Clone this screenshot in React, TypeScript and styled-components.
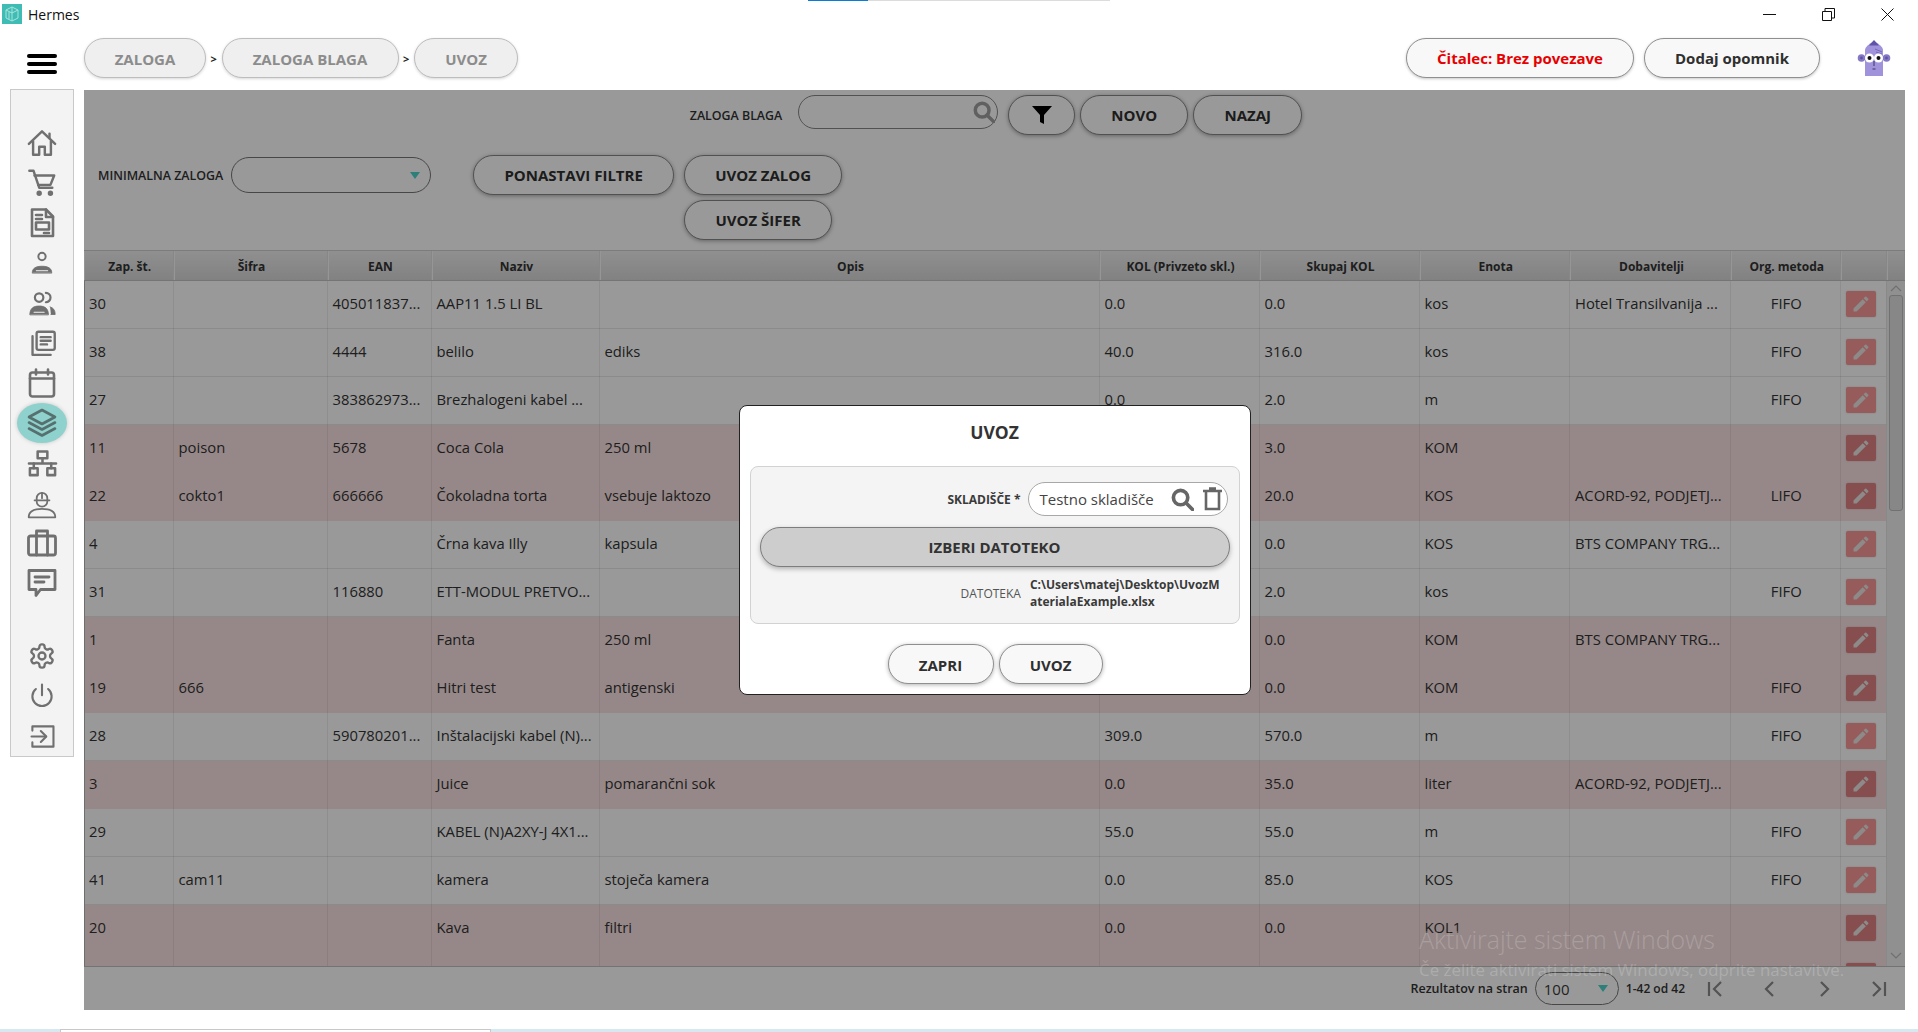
import React from "react";
import styled, { createGlobalStyle } from "styled-components";

const GlobalStyle = createGlobalStyle`
  html, body { margin: 0; padding: 0; height: 100%; background: #fff; overflow: hidden; }
  body { font-family: "Open Sans", "Noto Sans", "Liberation Sans", sans-serif; color: #333; }
  #root { height: 100%; }
  * { box-sizing: border-box; }
`;

const Shell = styled.div`
  height: 1032px;
  display: flex;
  flex-direction: column;
  position: relative;
  overflow: hidden;
`;

/* ---------- window title bar ---------- */
const TitleBar = styled.div`
  height: 30px;
  flex: none;
  display: flex;
  align-items: center;
  padding: 0 1px 2px 2px;
  position: relative;
`;
const LoadStrip = styled.div`
  position: absolute;
  top: 0;
  left: 808px;
  width: 302px;
  height: 1px;
  background: linear-gradient(90deg, #0a7bd6 0 60px, #dcdcdc 60px);
`;
const WindowName = styled.span`
  margin-left: 6px;
  font-size: 14px;
  color: #111;
`;
const WindowButtons = styled.div`
  margin-left: auto;
  display: flex;
`;
const WindowButton = styled.div`
  width: 59px;
  height: 26px;
  display: flex;
  align-items: center;
  justify-content: center;
`;

/* ---------- header ---------- */
const Header = styled.header`
  height: 59px;
  flex: none;
  display: flex;
  align-items: flex-start;
  padding: 8px 27px 0 27px;
`;
const Burger = styled.div`
  width: 30px;
  height: 20px;
  margin: 16px 27px 0 0;
  display: flex;
  flex-direction: column;
  justify-content: space-between;
  span {
    display: block;
    height: 4px;
    border-radius: 2px;
    background: #000;
  }
`;
const Crumbs = styled.nav`
  display: flex;
  align-items: center;
`;
const Crumb = styled.div<{ $w: number }>`
  width: ${(p) => p.$w}px;
  height: 40px;
  padding-top: 2px;
  border-radius: 20px;
  border: 1px solid #bdbdbd;
  background: #efefef;
  color: #8c8c8c;
  font-size: 15px;
  font-weight: 700;
  display: flex;
  align-items: center;
  justify-content: center;
  box-shadow: 0 1px 3px rgba(0, 0, 0, 0.16);
`;
const CrumbSep = styled.span`
  width: 15.500px;
  text-align: center;
  font-size: 11px;
  font-weight: 700;
  color: #222;
`;
const HeaderRight = styled.div`
  margin-left: auto;
  display: flex;
  align-items: flex-start;
`;
const HeaderPill = styled.button<{ $w: number; $alert?: boolean }>`
  width: ${(p) => p.$w}px;
  height: 40px;
  margin-left: 10px;
  border-radius: 20px;
  border: 1px solid #8f8f8f;
  background: #f8f8f8;
  color: ${(p) => (p.$alert ? "#e60000" : "#2f2f2f")};
  font: 700 15px "Open Sans", sans-serif;
  box-shadow: 0 1px 3px rgba(0, 0, 0, 0.22);
  padding: 0;
`;
const Mascot = styled.div`
  width: 34px;
  height: 40px;
  margin: 1px 0 0 37px;
`;

/* ---------- body ---------- */
const Body = styled.div`
  height: 921px;
  flex: none;
  display: flex;
  align-items: flex-start;
  padding: 0 13px 0 10px;
`;
const Sidebar = styled.aside`
  width: 64px;
  height: 668px;
  margin-right: 10px;
  flex: none;
  background: #f3f3f3;
  border: 1px solid #c9c9c9;
  padding-top: 33px;
  display: flex;
  flex-direction: column;
  align-items: center;
`;
const NavItem = styled.div<{ $active?: boolean; $gap?: boolean }>`
  width: 50px;
  height: 40px;
  flex: none;
  margin-top: ${(p) => (p.$gap ? "33px" : "0")};
  border-radius: 50%;
  display: flex;
  align-items: center;
  justify-content: center;
  background: ${(p) => (p.$active ? "#8fd1cc" : "transparent")};
  box-shadow: ${(p) => (p.$active ? "0 0 4px rgba(0,0,0,.18)" : "none")};
  color: ${(p) => (p.$active ? "#55706e" : "#707070")};
`;
const Main = styled.main`
  flex: 1;
  height: 920px;
  margin-top: 1px;
  position: relative;
  display: flex;
  flex-direction: column;
  background: #fff;
  overflow: hidden;
`;

/* ---------- toolbar ---------- */
const Toolbar = styled.section`
  height: 160px;
  flex: none;
`;
const ToolbarTop = styled.div`
  display: flex;
  justify-content: center;
  align-items: flex-start;
  padding: 5px 0 0 3px;
`;
const ToolbarSecond = styled.div`
  display: flex;
  align-items: flex-start;
  margin-top: 19px;
  padding-left: 14px;
`;
const FieldLabel = styled.span`
  font-size: 12.400px;
  font-weight: 600;
  color: #333;
  line-height: 41px;
  white-space: nowrap;
`;
const SearchBox = styled.div`
  width: 200px;
  height: 34px;
  margin: 0 10px 0 16px;
  border: 1px solid #888;
  border-radius: 17px;
  background: #fff;
  display: flex;
  align-items: center;
  justify-content: flex-end;
  padding-right: 2px;
  color: #a0a0a0;
`;
const ActionButton = styled.button<{ $w: number; $ml?: number }>`
  width: ${(p) => p.$w}px;
  height: 40px;
  margin-left: ${(p) => p.$ml ?? 0}px;
  flex: none;
  border-radius: 20px;
  border: 1px solid #888;
  background: #fff;
  color: #2f2f2f;
  font: 700 15px "Open Sans", sans-serif;
  box-shadow: 0 1px 4px rgba(0, 0, 0, 0.35);
  padding: 0;
  display: flex;
  align-items: center;
  justify-content: center;
`;
const DropBox = styled.div<{ $w: number }>`
  width: ${(p) => p.$w}px;
  height: 36px;
  margin: 2px 0 0 8px;
  border: 1px solid #777;
  border-radius: 18px;
  background: #fff;
  display: flex;
  align-items: center;
  justify-content: flex-end;
  padding-right: 10px;
`;
const Caret = styled.span`
  width: 0;
  height: 0;
  border-left: 5px solid transparent;
  border-right: 5px solid transparent;
  border-top: 7px solid #4ad5ca;
`;
const ImportStack = styled.div`
  display: flex;
  flex-direction: column;
  gap: 5px;
  margin-left: 10px;
`;

/* ---------- table ---------- */
const colTemplate =
  "89.5px 154px 104px 168px 500px 160px 160px 150.5px 161px 109.5px 46px";
const HeadRow = styled.div`
  height: 31px;
  flex: none;
  display: grid;
  grid-template-columns: ${colTemplate} 1fr;
  background: linear-gradient(#f0f0f0, #d8d8d8);
  border-top: 1px solid #cfcfcf;
  border-bottom: 1px solid #c4c4c4;
`;
const HeadCell = styled.div`
  display: flex;
  align-items: center;
  justify-content: center;
  padding: 2px 0 0 2px;
  font-size: 12px;
  font-weight: 700;
  color: #333;
  border-right: 1px solid #e2e2e2;
  border-left: 1px solid #fafafa;
  white-space: nowrap;
`;
const TableBody = styled.div`
  height: 685px;
  flex: none;
  display: flex;
  overflow: hidden;
`;
const Rows = styled.div`
  width: 1802px;
  flex: none;
`;
const Row = styled.div<{ $pink?: boolean }>`
  height: 48px;
  display: grid;
  grid-template-columns: ${colTemplate};
  background: ${(p) => (p.$pink ? "#fbe3e3" : "#fff")};
  box-shadow: inset 1px 0 0 #b8b8b8, inset 0 -1px 0 ${(p) => (p.$pink ? "#fbe3e3" : "#e8e8e8")};
`;
const Cell = styled.div<{ $center?: boolean }>`
  display: flex;
  align-items: center;
  justify-content: ${(p) => (p.$center ? "center" : "flex-start")};
  padding-left: ${(p) => (p.$center ? 2 : 5)}px;
  padding-bottom: 4px;
  font-size: 14.800px;
  color: #333;
  border-right: 1px solid rgba(0, 0, 0, 0.07);
  white-space: nowrap;
  overflow: hidden;
`;
const ActionCell = styled.div`
  display: flex;
  align-items: center;
  padding: 0 0 3px 5px;
  border-right: 1px solid rgba(0, 0, 0, 0.07);
`;
const EditButton = styled.div<{ $pink?: boolean }>`
  width: 30px;
  height: 26px;
  border-radius: 2px;
  background: ${(p) => (p.$pink ? "#e08282" : "#fb9898")};
  color: #ebe6e6;
  display: flex;
  align-items: center;
  justify-content: center;
  box-shadow: 0 0 2px rgba(0, 0, 0, 0.18);
`;
const Scrollbar = styled.div`
  flex: 1;
  background: #f0f0f0;
  box-shadow: inset 1px 0 0 #e4e4e4;
  display: flex;
  flex-direction: column;
  align-items: center;
  padding-top: 4px;
`;
const ScrollThumb = styled.div`
  width: 14px;
  height: 216px;
  margin-top: 3px;
  background: #e2e2e2;
  border: 1px solid #bcbcbc;
  border-radius: 3px;
`;
const ScrollEnd = styled.div`
  margin-top: auto;
  padding-bottom: 2px;
`;

/* ---------- footer ---------- */
const Footer = styled.footer`
  flex: 1;
  background: #fff;
  border-top: 1px solid #c0c0c0;
  display: flex;
  align-items: center;
  justify-content: flex-end;
`;
const FootText = styled.span<{ $size: number }>`
  font-size: ${(p) => p.$size}px;
  font-weight: 600;
  color: #333;
  white-space: nowrap;
`;
const PageSize = styled.div`
  width: 84px;
  height: 33px;
  margin: 0 7px;
  border: 1px solid #777;
  border-radius: 17px;
  display: flex;
  align-items: center;
  justify-content: space-between;
  padding: 0 10px 0 8px;
  font-size: 15px;
  color: #3a3a3a;
`;
const PageButton = styled.div`
  width: 54px;
  height: 32px;
  display: flex;
  align-items: center;
  justify-content: center;
  color: #8a8a8a;
`;
const PageButtons = styled.div`
  display: flex;
  margin-left: 4px;
`;

/* ---------- modal ---------- */
const Dim = styled.div`
  position: absolute;
  inset: 0;
  background: rgba(0, 0, 0, 0.4);
  display: flex;
  align-items: center;
  justify-content: center;
`;
const Modal = styled.div`
  width: 512px;
  height: 290px;
  background: #fff;
  border: 1px solid #222;
  border-radius: 8px;
  padding: 0 10px;
  display: flex;
  flex-direction: column;
  align-items: stretch;
`;
const ModalTitle = styled.h2`
  margin: 0;
  height: 60px;
  flex: none;
  padding-top: 13px;
  font-size: 17.500px;
  line-height: 26px;
  font-weight: 700;
  text-align: center;
  color: #333;
`;
const ModalPanel = styled.div`
  height: 158px;
  flex: none;
  background: #f4f4f4;
  border: 1px solid #d2d2d2;
  border-radius: 8px;
  padding: 15px 9px 0;
  display: flex;
  flex-direction: column;
`;
const StoreRow = styled.div`
  display: flex;
  align-items: center;
  justify-content: flex-end;
  padding-right: 2px;
  gap: 7px;
`;
const StoreLabel = styled.span`
  font-size: 12px;
  font-weight: 700;
  color: #3a3a3a;
`;
const StoreInput = styled.div`
  width: 200px;
  height: 34px;
  background: #fff;
  border: 1px solid #a8a8a8;
  border-radius: 17px;
  display: flex;
  align-items: center;
  padding: 0 5px 0 11px;
  font-size: 15px;
  color: #444;
  white-space: nowrap;
`;
const StoreIcons = styled.div`
  margin-left: auto;
  display: flex;
  align-items: center;
  gap: 9px;
  color: #666;
`;
const PickFile = styled.button`
  height: 40px;
  margin-top: 11px;
  flex: none;
  border-radius: 20px;
  border: 1px solid #7d7d7d;
  background: #cdcdcd;
  color: #333;
  font: 700 15px "Open Sans", sans-serif;
  box-shadow: 0 2px 5px rgba(0, 0, 0, 0.28);
`;
const FileRow = styled.div`
  display: flex;
  align-items: center;
  margin-top: 9px;
  padding-left: 201px;
`;
const FileLabel = styled.span`
  font-size: 12px;
  color: #555;
  margin-right: 9px;
`;
const FilePath = styled.span`
  width: 190px;
  font-size: 12px;
  line-height: 17px;
  font-weight: 700;
  color: #3a3a3a;
  word-break: break-all;
`;
const ModalActions = styled.div`
  display: flex;
  justify-content: center;
  gap: 5px;
  padding: 20px 0 0 1px;
`;
const ModalButton = styled.button<{ $w: number }>`
  width: ${(p) => p.$w}px;
  height: 40px;
  border-radius: 20px;
  border: 1px solid #8f8f8f;
  background: #f8f8f8;
  color: #2f2f2f;
  font: 700 15px "Open Sans", sans-serif;
  box-shadow: 0 1px 4px rgba(0, 0, 0, 0.3);
  padding: 2px 0 0;
`;

/* ---------- overlays at the screen edge ---------- */
const Watermark = styled.div`
  position: absolute;
  left: 1419px;
  top: 920px;
  color: rgba(255, 255, 255, 0.2);
  pointer-events: none;
  white-space: nowrap;
  div:first-child {
    font-size: 24.900px;
    line-height: 38px;
    font-weight: 300;
  }
  div:last-child {
    font-size: 16.900px;
    line-height: 24px;
  }
`;
const BottomGap = styled.div`
  height: 19px;
  flex: none;
`;
const TaskStrip = styled.div`
  height: 3px;
  flex: none;
  background: #d6e9f0;
  padding-left: 60px;
`;
const TaskWindow = styled.div`
  width: 431px;
  height: 3px;
  background: #fff;
  border-top: 1px solid #c8c8c8;
  border-left: 1px solid #c8c8c8;
  border-right: 1px solid #c8c8c8;
`;

/* ---------- icons ---------- */
const Ico: React.FC<{ s?: number; w?: number; children: React.ReactNode; vb?: string }> = ({
  s = 30,
  w = 2.6,
  vb = "0 0 32 32",
  children,
}) => (
  <svg
    width={s}
    height={s}
    viewBox={vb}
    fill="none"
    stroke="currentColor"
    strokeWidth={w}
    strokeLinecap="round"
    strokeLinejoin="round"
  >
    {children}
  </svg>
);

const navIcons: React.ReactNode[] = [
  <Ico key="home">
    <path d="M2 17 16 3.500 30 17" />
    <path d="M24 6v4" />
    <path d="M6.500 14v14.500H13V20h6v8.500h6.500V14" />
  </Ico>,
  <Ico key="cart">
    <path d="M2.500 3h4.500l6 18h14" />
    <path d="M8 8h21l-4 10H12" />
    <circle cx="13" cy="27" r="1.600" fill="currentColor" />
    <circle cx="25" cy="27" r="1.600" fill="currentColor" />
  </Ico>,
  <Ico key="doc" s={32}>
    <path d="M6 2.500h14l7 7v19.500H6z" />
    <path d="M20 2.500V10h7" />
    <path d="M10 8h6M10 12h6" />
    <rect x="10" y="15.500" width="13" height="7" />
    <path d="M18 26h5" />
  </Ico>,
  <Ico key="user" s={26} w={2.4}>
    <circle cx="16" cy="8" r="4.500" />
    <path d="M4 28c0-6 5-8 12-8s12 2 12 8z" fill="currentColor" strokeWidth={1} />
    <path d="M9 25.500h14" stroke="#f3f3f3" strokeWidth={1.200} />
  </Ico>,
  <Ico key="users" s={27} w={2.6}>
    <circle cx="12" cy="9" r="5" />
    <path d="M20 3.500a5.500 5.500 0 0 1 0 11" />
    <path d="M1 29c0-7 4-10 11-10s11 3 11 10z" fill="currentColor" strokeWidth={1} />
    <path d="M25 20c4 1 6 4 6 9h-5" fill="currentColor" strokeWidth={1} />
    <path d="M6 26.500h12" stroke="#f3f3f3" strokeWidth={1.200} />
  </Ico>,
  <Ico key="stack" s={29}>
    <rect x="9.500" y="3" width="20" height="20" rx="2" />
    <path d="M5 8v20.500h20" />
    <path d="M14 9h11M14 13h11M14 17h7" />
  </Ico>,
  <Ico key="cal" s={32}>
    <rect x="4" y="5.500" width="24" height="24" rx="2.500" />
    <path d="M4 11.500h24" />
    <path d="M10 2.500v5M22 2.500v5" />
  </Ico>,
  <Ico key="layers" s={32} w={2.6}>
    <path d="M16 3 29 10 16 17 3 10z" />
    <path d="M3 15.500 16 22.500 29 15.500" />
    <path d="M3 21.500 16 28.500 29 21.500" />
  </Ico>,
  <Ico key="net" s={31} w={2.6}>
    <rect x="11" y="3.500" width="10" height="7" />
    <path d="M16 10.500V16M2 16h28" />
    <path d="M7 16v5M25 16v5" />
    <rect x="3" y="21" width="8" height="7" />
    <rect x="21" y="21" width="8" height="7" />
  </Ico>,
  <Ico key="worker" s={34} w={1.7}>
    <path d="M9 13.500h14" />
    <path d="M11 13.500v-2a5 5 0 0 1 10 0v2" />
    <path d="M16 6.500v5" />
    <path d="M11 14.500a5 5 0 0 0 10 0" />
    <path d="M3.500 29.500c0-6 5-8 12.500-8s12.500 2 12.500 8z" />
  </Ico>,
  <Ico key="case" s={32} w={2.8}>
    <rect x="2.500" y="9" width="27" height="19" rx="2" />
    <path d="M10.500 9V4h11v5" />
    <path d="M10.500 9v19M21.500 9v19" />
  </Ico>,
  <Ico key="chat" s={32} w={2.8}>
    <path d="M3 3.500h26v19H14.500L10 28.500v-6H3z" />
    <path d="M9 10h14M9 15h9" />
  </Ico>,
  <Ico key="gear" s={28} vb="0 0 24 24" w={2}>
    <path d="M12.220 2h-.44a2 2 0 0 0-2 2v.18a2 2 0 0 1-1 1.730l-.43.250a2 2 0 0 1-2 0l-.15-.080a2 2 0 0 0-2.730.730l-.22.380a2 2 0 0 0 .730 2.730l.150.100a2 2 0 0 1 1 1.720v.510a2 2 0 0 1-1 1.740l-.150.090a2 2 0 0 0-.730 2.730l.220.380a2 2 0 0 0 2.730.730l.150-.080a2 2 0 0 1 2 0l.430.250a2 2 0 0 1 1 1.730V20a2 2 0 0 0 2 2h.44a2 2 0 0 0 2-2v-.18a2 2 0 0 1 1-1.730l.430-.250a2 2 0 0 1 2 0l.150.080a2 2 0 0 0 2.730-.730l.220-.390a2 2 0 0 0-.730-2.730l-.150-.080a2 2 0 0 1-1-1.740v-.500a2 2 0 0 1 1-1.740l.150-.090a2 2 0 0 0 .730-2.730l-.220-.380a2 2 0 0 0-2.730-.730l-.150.080a2 2 0 0 1-2 0l-.430-.250a2 2 0 0 1-1-1.730V4a2 2 0 0 0-2-2z" />
    <circle cx="12" cy="12" r="3" />
  </Ico>,
  <Ico key="power" s={28} w={2.4}>
    <path d="M9 8a11 11 0 1 0 14 0" />
    <path d="M16 3v12" />
  </Ico>,
  <Ico key="login" s={27} w={2.5}>
    <path d="M4 9V4h25v24H4v-5" />
    <path d="M3 16h17" />
    <path d="M14 9.500 20.500 16 14 22.500" />
  </Ico>,
];

const Glass: React.FC<{ s: number }> = ({ s }) => (
  <svg width={s} height={s} viewBox="0 0 24 24" fill="none" stroke="currentColor" strokeWidth={3.8} strokeLinecap="round">
    <circle cx="10" cy="10" r="7.500" />
    <path d="m16 16 6.500 6.500" />
  </svg>
);

type Rec = {
  n: string;
  sifra?: string;
  ean?: string;
  naziv: string;
  opis?: string;
  kol?: string;
  total: string;
  unit: string;
  dob?: string;
  org?: string;
  pink?: boolean;
};
const rows: Rec[] = [
  { n: "30", ean: "405011837...", naziv: "AAP11 1.5 LI BL", kol: "0.0", total: "0.0", unit: "kos", dob: "Hotel Transilvanija ...", org: "FIFO" },
  { n: "38", ean: "4444", naziv: "belilo", opis: "ediks", kol: "40.0", total: "316.0", unit: "kos", org: "FIFO" },
  { n: "27", ean: "383862973...", naziv: "Brezhalogeni kabel ...", kol: "0.0", total: "2.0", unit: "m", org: "FIFO" },
  { n: "11", sifra: "poison", ean: "5678", naziv: "Coca Cola", opis: "250 ml", total: "3.0", unit: "KOM", pink: true },
  { n: "22", sifra: "cokto1", ean: "666666", naziv: "Čokoladna torta", opis: "vsebuje laktozo", total: "20.0", unit: "KOS", dob: "ACORD-92, PODJETJ...", org: "LIFO", pink: true },
  { n: "4", naziv: "Črna kava Illy", opis: "kapsula", total: "0.0", unit: "KOS", dob: "BTS COMPANY TRG..." },
  { n: "31", ean: "116880", naziv: "ETT-MODUL PRETVO...", total: "2.0", unit: "kos", org: "FIFO" },
  { n: "1", naziv: "Fanta", opis: "250 ml", total: "0.0", unit: "KOM", dob: "BTS COMPANY TRG...", pink: true },
  { n: "19", sifra: "666", naziv: "Hitri test", opis: "antigenski", total: "0.0", unit: "KOM", org: "FIFO", pink: true },
  { n: "28", ean: "590780201...", naziv: "Inštalacijski kabel (N)...", kol: "309.0", total: "570.0", unit: "m", org: "FIFO" },
  { n: "3", naziv: "Juice", opis: "pomarančni sok", kol: "0.0", total: "35.0", unit: "liter", dob: "ACORD-92, PODJETJ...", pink: true },
  { n: "29", naziv: "KABEL (N)A2XY-J 4X1...", kol: "55.0", total: "55.0", unit: "m", org: "FIFO" },
  { n: "41", sifra: "cam11", naziv: "kamera", opis: "stoječa kamera", kol: "0.0", total: "85.0", unit: "KOS", org: "FIFO" },
  { n: "20", naziv: "Kava", opis: "filtri", kol: "0.0", total: "0.0", unit: "KOL1", pink: true },
  { n: "", naziv: "", total: "", unit: "", pink: true },
];
const heads = ["Zap. št.", "Šifra", "EAN", "Naziv", "Opis", "KOL (Privzeto skl.)", "Skupaj KOL", "Enota", "Dobavitelji", "Org. metoda", "", ""];

export default function App() {
  return (
    <Shell>
      <GlobalStyle />
      <TitleBar>
        <LoadStrip />
        <svg width="20" height="20" viewBox="0 0 20 20">
          <rect width="20" height="20" fill="#3fbdb4" />
          <path d="M10 3 4 6v8l6 3 6-3V6zM10 3v14M4 6l6 3 6-3M7 8v7" fill="none" stroke="#a8e3de" strokeWidth="1" />
        </svg>
        <WindowName>Hermes</WindowName>
        <WindowButtons>
          <WindowButton>
            <svg width="13" height="13"><path d="M0 6.500h13" stroke="#111" /></svg>
          </WindowButton>
          <WindowButton>
            <svg width="13" height="13" fill="none" stroke="#111"><path d="M.5 3.500h9v9h-9z" /><path d="M3 3V.5h9.500V10H10" /></svg>
          </WindowButton>
          <WindowButton>
            <svg width="13" height="13" stroke="#111"><path d="M.5.5l12 12M12.500.5l-12 12" /></svg>
          </WindowButton>
        </WindowButtons>
      </TitleBar>

      <Header>
        <Burger><span /><span /><span /></Burger>
        <Crumbs>
          <Crumb $w={122}>ZALOGA</Crumb>
          <CrumbSep>&gt;</CrumbSep>
          <Crumb $w={177}>ZALOGA BLAGA</Crumb>
          <CrumbSep>&gt;</CrumbSep>
          <Crumb $w={104}>UVOZ</Crumb>
        </Crumbs>
        <HeaderRight>
          <HeaderPill $w={228} $alert>Čitalec: Brez povezave</HeaderPill>
          <HeaderPill $w={176}>Dodaj opomnik</HeaderPill>
          <Mascot>
            <svg width="34" height="40" viewBox="0 0 34 40">
              <circle cx="4.500" cy="19" r="3.800" fill="#8478c4" />
              <circle cx="29.500" cy="19" r="3.800" fill="#8478c4" />
              <circle cx="4.500" cy="19" r="1.400" fill="#5f52a8" />
              <circle cx="29.500" cy="19" r="1.400" fill="#5f52a8" />
              <path d="M8 37V11c0-3 4-6 9-9 5 3 9 6 9 9v26z" fill="#a093dc" />
              <path d="M12 6.500 17 1l5 5.500z" fill="#5f52a8" />
              <path d="M18 10l7 3M19 13l6 2" stroke="#7468b8" strokeWidth="1" />
              <circle cx="12.500" cy="19" r="4.500" fill="#fff" />
              <circle cx="21.500" cy="19" r="4.500" fill="#fff" />
              <circle cx="12.500" cy="19" r="2" fill="#111" />
              <circle cx="21.500" cy="19" r="2" fill="#111" />
              <path d="M17 22v5M15.500 30h3" stroke="#3c3566" strokeWidth="1" />
            </svg>
          </Mascot>
        </HeaderRight>
      </Header>

      <Body>
        <Sidebar>
          {navIcons.map((icon, i) => (
            <NavItem key={i} $active={i === 7} $gap={i === 12}>
              {icon}
            </NavItem>
          ))}
        </Sidebar>
        <Main>
          <Toolbar>
            <ToolbarTop>
              <FieldLabel>ZALOGA BLAGA</FieldLabel>
              <SearchBox><Glass s={22} /></SearchBox>
              <ActionButton $w={67}>
                <svg width="20" height="20" viewBox="0 0 20 20"><path d="M0 1h20l-8 9v9l-4-2v-7z" fill="#000" /></svg>
              </ActionButton>
              <ActionButton $w={108} $ml={5}>NOVO</ActionButton>
              <ActionButton $w={109} $ml={5}>NAZAJ</ActionButton>
            </ToolbarTop>
            <ToolbarSecond>
              <FieldLabel>MINIMALNA ZALOGA</FieldLabel>
              <DropBox $w={200}><Caret /></DropBox>
              <ActionButton $w={201} $ml={42}>PONASTAVI FILTRE</ActionButton>
              <ImportStack>
                <ActionButton $w={158}>UVOZ ZALOG</ActionButton>
                <ActionButton $w={148}>UVOZ ŠIFER</ActionButton>
              </ImportStack>
            </ToolbarSecond>
          </Toolbar>

          <HeadRow>
            {heads.map((h, i) => (
              <HeadCell key={i}>{h}</HeadCell>
            ))}
          </HeadRow>
          <TableBody>
            <Rows>
              {rows.map((r, i) => (
                <Row key={i} $pink={r.pink}>
                  <Cell>{r.n}</Cell>
                  <Cell>{r.sifra}</Cell>
                  <Cell>{r.ean}</Cell>
                  <Cell>{r.naziv}</Cell>
                  <Cell>{r.opis}</Cell>
                  <Cell>{r.kol}</Cell>
                  <Cell>{r.total}</Cell>
                  <Cell>{r.unit}</Cell>
                  <Cell>{r.dob}</Cell>
                  <Cell $center>{r.org}</Cell>
                  <ActionCell>
                    <EditButton $pink={r.pink}>
                      <svg width="20" height="20" viewBox="0 0 24 24" fill="currentColor">
                        <path d="M3 17.250V21h3.750L17.810 9.940l-3.750-3.750L3 17.250zM20.710 7.040c.39-.39.39-1.020 0-1.410l-2.340-2.340c-.39-.39-1.020-.39-1.410 0l-1.830 1.830 3.750 3.750 1.830-1.830z" />
                      </svg>
                    </EditButton>
                  </ActionCell>
                </Row>
              ))}
            </Rows>
            <Scrollbar>
              <svg width="12" height="7" fill="none" stroke="#bbb" strokeWidth="1.200"><path d="M1 6l5-5 5 5" /></svg>
              <ScrollThumb />
              <ScrollEnd>
                <svg width="12" height="7" fill="none" stroke="#bbb" strokeWidth="1.200"><path d="M1 1l5 5 5-5" /></svg>
              </ScrollEnd>
            </Scrollbar>
          </TableBody>
          <Footer>
            <FootText $size={12.500}>Rezultatov na stran</FootText>
            <PageSize>100<Caret /></PageSize>
            <FootText $size={12}>1-42 od 42</FootText>
            <PageButtons>
              <PageButton>
                <svg width="18" height="18" fill="none" stroke="currentColor" strokeWidth="2.200"><path d="M2 2v14M14 2 7 9l7 7" /></svg>
              </PageButton>
              <PageButton>
                <svg width="18" height="18" fill="none" stroke="currentColor" strokeWidth="2.200"><path d="M12 2 5 9l7 7" /></svg>
              </PageButton>
              <PageButton>
                <svg width="18" height="18" fill="none" stroke="currentColor" strokeWidth="2.200"><path d="M6 2l7 7-7 7" /></svg>
              </PageButton>
              <PageButton>
                <svg width="18" height="18" fill="none" stroke="currentColor" strokeWidth="2.200"><path d="M16 2v14M4 2l7 7-7 7" /></svg>
              </PageButton>
            </PageButtons>
          </Footer>

          <Dim>
            <Modal>
              <ModalTitle>UVOZ</ModalTitle>
              <ModalPanel>
                <StoreRow>
                  <StoreLabel>SKLADIŠČE *</StoreLabel>
                  <StoreInput>
                    Testno skladišče
                    <StoreIcons>
                      <Glass s={23} />
                      <svg width="19" height="24" viewBox="0 0 19 24" fill="none" stroke="currentColor" strokeWidth="2.600">
                        <path d="M0 4h19M6 1.500h7M3 5v17h13V5" />
                      </svg>
                    </StoreIcons>
                  </StoreInput>
                </StoreRow>
                <PickFile>IZBERI DATOTEKO</PickFile>
                <FileRow>
                  <FileLabel>DATOTEKA</FileLabel>
                  <FilePath>C:\Users\matej\Desktop\UvozMaterialaExample.xlsx</FilePath>
                </FileRow>
              </ModalPanel>
              <ModalActions>
                <ModalButton $w={106}>ZAPRI</ModalButton>
                <ModalButton $w={104}>UVOZ</ModalButton>
              </ModalActions>
            </Modal>
          </Dim>
        </Main>
      </Body>
      <BottomGap />
      <TaskStrip><TaskWindow /></TaskStrip>
      <Watermark>
        <div>Aktivirajte sistem Windows</div>
        <div>Če želite aktivirati sistem Windows, odprite nastavitve.</div>
      </Watermark>
    </Shell>
  );
}
